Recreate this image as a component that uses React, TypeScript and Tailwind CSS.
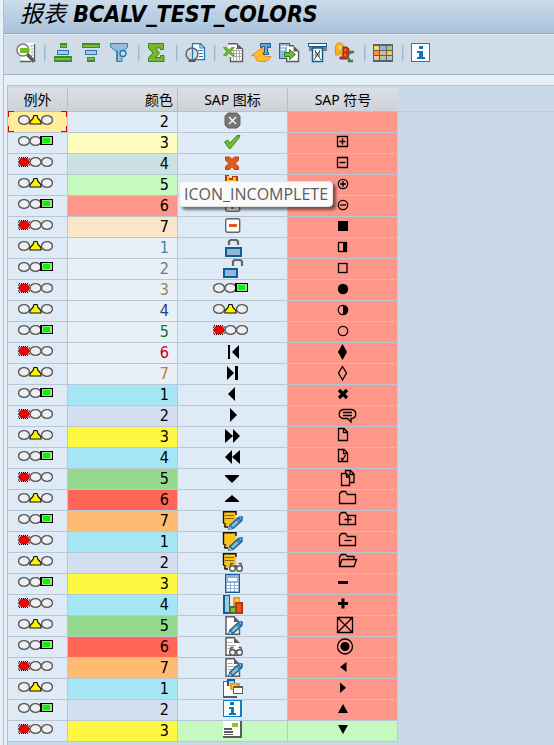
import type { ReactNode } from "react";

type Light = "red" | "yellow" | "green";

interface Row {
	light: Light;
	value: number;
	cell: string;
	icon: ReactNode;
	symbol: ReactNode;
}

function Lamp({ cx }: { cx: number }) {
	return <ellipse cx={cx} cy="6" rx="5.5" ry="4.4" fill="#efefef" stroke="#5a5a5a" strokeWidth="1.4" />;
}

function TrafficLight({ light }: { light: Light }) {
	return (
		<svg width="35" height="12" viewBox="0 0 35 12" className="block" role="img" aria-label={light}>
			{light === "red" ? (
				<g>
					<rect x="1" y="2" width="10" height="8" fill="#ff8a80" />
					<path d="M1 1.500h10M1 10.500h10" stroke="#000" strokeDasharray="1 1" />
					<path d="M.500 2.500v8M11.500 2.500v8" stroke="#000" strokeDasharray="1 2" />
					<ellipse cx="6" cy="6" rx="5" ry="4" fill="#fa0000" stroke="#5a0000" strokeWidth="0.6" />
				</g>
			) : (
				<Lamp cx={6} />
			)}
			{light !== "yellow" && <Lamp cx={17.5} />}
			{light === "green" ? (
				<g shapeRendering="crispEdges">
					<rect x="22" y="1" width="13" height="9" fill="#000" />
					<rect x="24" y="2" width="10" height="7" fill="#a4dd90" />
					<rect x="25" y="3" width="7" height="5" fill="#00f800" />
				</g>
			) : (
				<Lamp cx={29} />
			)}
			{light === "yellow" && (
				<path d="M16 1.500h3l1 3 1.500 1.500 1.500 2v2H12v-2l1.500-2 1.500-1.500z" fill="#fff200" stroke="#111" strokeWidth="1.200" />
			)}
		</svg>
	);
}

function Glyph({ children, crisp }: { children?: ReactNode; crisp?: boolean }) {
	return (
		<svg
			width="21"
			height="20"
			viewBox="0 0 21 20"
			className="block overflow-visible"
			shapeRendering={crisp ? "crispEdges" : undefined}
			aria-hidden="true"
		>
			{children}
		</svg>
	);
}

function Pencil() {
	return (
		<g>
			<path d="M6 19l1-5L16.500 5.500 20 5l1 1-.500 4L11.500 18z" fill="#1f6b9c" />
			<path d="M9 14.500l7-6.500 2 2-7 6.500z" fill="#8fb6d6" />
			<path d="M17 6.500l2.500-.500-.500 3z" fill="#7fb0d4" />
			<path d="M7 18.500l.800-3.200 2.200 2z" fill="#a8cbe2" />
			<path d="M14 8l3.500 3.500" stroke="#12557f" />
		</g>
	);
}

function Glasses() {
	return (
		<g fill="#f4f6f8" stroke="#5c5c5c" strokeWidth="1.4">
			<path d="M8 14.500l1-4h2.500M20 14.500l-1-4h-2.500M12 13.500h4" fill="none" />
			<circle cx="10.500" cy="15.500" r="2.800" />
			<circle cx="17.500" cy="15.500" r="2.800" />
		</g>
	);
}

function Note({ lines, children }: { lines?: boolean; children: ReactNode }) {
	return (
		<Glyph>
			<path d="M1.500 1h12.500v13.500H7L5.500 16H2v-1.500l1.500-1.500-2-2z" fill="#ffc41a" />
			<path d="M1.500 12V.700H14V4" fill="none" stroke="#111" strokeWidth="1.400" />
			<path d="M1 12l2.500 1-1 1.500.5 1.500H6M14 12v2.500H8" fill="none" stroke="#111" strokeWidth="1.300" />
			{lines && <path d="M3 4.500h9M3 7.500h9" stroke="#7d6320" />}
			{children}
		</Glyph>
	);
}

function Doc({ lines = true, children }: { lines?: boolean; children: ReactNode }) {
	return (
		<Glyph>
			<path d="M4 1h8l5 5v12.500H4z" fill="#fff" />
			<path d="M13 .700H4V18.300h13.500V13" fill="none" stroke="#5c5c5c" strokeWidth="1.500" />
			<path d="M12 0l6 6h-6z" fill="#5c5c5c" />
			{lines && <path d="M5.500 5.500h5M5.500 8.500h8M5.500 11.500h6" stroke="#a8a8a8" />}
			{children}
		</Glyph>
	);
}

function Tri({ points }: { points: string }) {
	return <polygon points={points} fill="#000" />;
}

const outline = { fill: "none", stroke: "#000", strokeWidth: 1.3 };
const folder = "M7.500 13.500v-9.500l2-2.500h4l2 3h8v9z";

const icons: ReactNode[] = [
	<Glyph>
		<path d="M6 1h9l3 3v9l-3 3H6l-3-3V4z" fill="#757575" stroke="#626262" />
		<path d="M7 5l7 7M14 5l-7 7" stroke="#fff" strokeWidth="1.300" />
	</Glyph>,
	<Glyph>
		<path d="M2.500 9l3-2 2.500 3 7-7.500h3L17 5 8.500 15.500H7z" fill="#76b82a" stroke="#3c8a35" />
	</Glyph>,
	<Glyph>
		<path d="M3.500 3h4L10 5.500 12.500 3h4v3l-3.500 3.500 3.500 3v3h-4L10 12.500 7.500 15.500h-4v-3L7 9.500 3.500 6z" fill="#e35a16" stroke="#b3411c" />
	</Glyph>,
	<Glyph crisp>
		<path d="M3 0h4v3h3V1h6v6H3z" fill="#b93418" />
		<path d="M5 1h2v4h4V2h3v5H5z" fill="#ffc519" />
	</Glyph>,
	<Glyph>
		<rect x="3.700" y="1.700" width="14" height="13.600" rx="2" fill="#fff" stroke="#666" strokeWidth="1.400" />
		<path d="M7 9.500h7M10.500 6v7" stroke="#56a62b" strokeWidth="2.500" />
	</Glyph>,
	<Glyph>
		<rect x="3.700" y="1.700" width="14" height="13.600" rx="2" fill="#fff" stroke="#666" strokeWidth="1.400" />
		<path d="M7 8.500h8" stroke="#e35a16" strokeWidth="3" />
	</Glyph>,
	<Glyph>
		<path d="M7 7V3.500L8.500 2h6L16 3.500V7" fill="none" stroke="#666" strokeWidth="2.200" />
		<rect x="4" y="10" width="15" height="8" fill="#95b6da" stroke="#0f5f94" strokeWidth="2" />
	</Glyph>,
	<Glyph>
		<path d="M11 7V2.500L12.500 1h6L20 2.500V7" fill="none" stroke="#666" strokeWidth="2.200" />
		<rect x="2" y="10" width="13" height="8" fill="#95b6da" stroke="#0f5f94" strokeWidth="2" />
	</Glyph>,
	<TrafficLight light="green" />,
	<TrafficLight light="yellow" />,
	<TrafficLight light="red" />,
	<Glyph>
		<rect x="6" y="2" width="2" height="14" />
		<Tri points="17,2 17,16 10,9" />
	</Glyph>,
	<Glyph>
		<Tri points="5,2 5,16 12,9" />
		<rect x="13" y="2" width="3" height="14" />
	</Glyph>,
	<Glyph>
		<Tri points="13,2 13,16 6,9" />
	</Glyph>,
	<Glyph>
		<Tri points="8,2 8,16 15,9" />
	</Glyph>,
	<Glyph>
		<Tri points="3,2 3,16 11,9" />
		<Tri points="11,2 11,16 18,9" />
	</Glyph>,
	<Glyph>
		<Tri points="10,2 10,16 3,9" />
		<Tri points="18,2 18,16 10,9" />
	</Glyph>,
	<Glyph>
		<Tri points="3,6 17,6 17,7 10,14 3,7" />
	</Glyph>,
	<Glyph>
		<Tri points="3,12 17,12 17,11 10,5 3,11" />
	</Glyph>,
	<Note lines>
		<Pencil />
	</Note>,
	<Note>
		<Pencil />
	</Note>,
	<Note lines>
		<Glasses />
	</Note>,
	<Glyph crisp>
		<rect x="3" y="0" width="15" height="19" fill="#0f5f94" />
		<rect x="4" y="1" width="13" height="17" fill="#8db3d6" />
		<rect x="6" y="4" width="9" height="3" fill="#fff" />
		<path d="M5 9h3v2H5zM9 9h3v2H9zM13 9h3v2h-3zM5 12h3v2H5zM9 12h3v2H9zM13 12h3v2h-3zM5 15h3v2H5zM9 15h3v2H9zM13 15h3v2h-3z" fill="#fff" />
	</Glyph>,
	<Glyph crisp>
		<rect x="1" y="0" width="7" height="19" fill="#0f5f94" />
		<rect x="3" y="1" width="4" height="16" fill="#a9c4de" />
		<rect x="11" y="2" width="7" height="13" fill="#f39a12" />
		<rect x="13" y="4" width="4" height="6" fill="#ffcc22" />
		<rect x="13" y="7" width="8" height="12" fill="#b93418" />
		<rect x="15" y="9" width="4" height="8" fill="#e35a16" />
		<rect x="7" y="11" width="7" height="8" fill="#2f7d33" />
		<rect x="9" y="13" width="4" height="4" fill="#86bd1f" />
	</Glyph>,
	<Doc lines={false}>
		<Pencil />
	</Doc>,
	<Doc>
		<Glasses />
	</Doc>,
	<Doc>
		<Pencil />
	</Doc>,
	<Glyph crisp>
		<path d="M1 2h4v15h10v2H1z" fill="#5c5c5c" />
		<path d="M2 3h11v14H2z" fill="#fff" />
		<rect x="5" y="0" width="8" height="7" fill="#0f5f94" />
		<rect x="7" y="2" width="5" height="5" fill="#b8d0e6" />
		<rect x="8" y="4" width="10" height="7" fill="#f39a12" />
		<rect x="10" y="6" width="5" height="4" fill="#ffd84a" />
		<rect x="11" y="7" width="10" height="8" fill="#5c5c5c" />
		<rect x="12" y="9" width="8" height="5" fill="#fff" />
	</Glyph>,
	<Glyph crisp>
		<rect x="1" y="0" width="19" height="17" fill="#0f7ec2" />
		<rect x="2" y="1" width="16" height="15" fill="#fff" />
		<path d="M8 2h4v3H8zM7 7h5v6h2v2H7v-2h2V9H7z" fill="#0a78bd" />
	</Glyph>,
	<Glyph crisp>
		<rect x="1" y="0" width="19" height="17" fill="#5c5c5c" />
		<rect x="1" y="0" width="17" height="15" fill="#fff" />
		<rect x="10" y="2" width="6" height="4" fill="#8fc32f" />
		<path d="M2 7h8v2H2zM2 10h9v2H2zM2 13h9v1H2z" fill="#5c5c5c" />
	</Glyph>,
];

const symbols: ReactNode[] = [
	null,
	<Glyph>
		<path d="M5.500 3.500h10v10h-10zM7.500 8.500h6M10.500 5.500v6" {...outline} />
	</Glyph>,
	<Glyph>
		<path d="M5.500 3.500h10v10h-10zM7.500 8.500h6" {...outline} />
	</Glyph>,
	<Glyph>
		<circle cx="11" cy="9" r="4.700" {...outline} />
		<path d="M8 9h6M11 6v6" {...outline} />
	</Glyph>,
	<Glyph>
		<circle cx="11" cy="9" r="4.700" {...outline} />
		<path d="M8 9h6" {...outline} />
	</Glyph>,
	<Glyph>
		<rect x="6" y="4" width="10" height="10" />
	</Glyph>,
	<Glyph>
		<rect x="6.500" y="4.500" width="8" height="9" {...outline} />
		<rect x="11" y="4" width="4" height="10" />
	</Glyph>,
	<Glyph>
		<rect x="6.500" y="4.500" width="8.500" height="9" {...outline} />
	</Glyph>,
	<Glyph>
		<circle cx="11" cy="9" r="5.200" />
	</Glyph>,
	<Glyph>
		<circle cx="11" cy="9" r="4.700" {...outline} />
		<path d="M11 4.500a4.500 4.500 0 0 1 0 9z" />
	</Glyph>,
	<Glyph>
		<circle cx="11" cy="9" r="4.700" {...outline} />
	</Glyph>,
	<Glyph>
		<Tri points="10.500,1 15,9 10.500,17 6,9" />
	</Glyph>,
	<Glyph>
		<path d="M10.500 2.500L14.500 9l-4 7-4-7z" {...outline} />
	</Glyph>,
	<Glyph>
		<path d="M7 5l8 8M15 5l-8 8" stroke="#000" strokeWidth="3.200" />
	</Glyph>,
	<Glyph>
		<path d="M11 3.500h9c5 1 5 8 0 9h-1v3.500l-3.500-3.500H11c-5-1-5-8 0-9zM11 6.500h9M11 9.500h9" {...outline} />
	</Glyph>,
	<Glyph>
		<path d="M6.500 1.500h5.500l3.500 3.500v8.500h-9zM11.500 1.500V5.500h4" {...outline} />
	</Glyph>,
	<Glyph>
		<path d="M6.500 1.500h5.500l3.500 3.500v8.500h-9zM11.500 1.500V5.500h4M9 10l1.500 2 3-5" {...outline} />
	</Glyph>,
	<Glyph>
		<path d="M9.500 4.500h5l3 3v9h-8zM14.500 4.500v3.500h3M13.500 4V1.500h5l3.500 3.500v8.500h-4.500M18 1.500V5.500h4" {...outline} />
	</Glyph>,
	<Glyph>
		<path d={folder} {...outline} />
	</Glyph>,
	<Glyph>
		<path d={folder} {...outline} />
		<path d="M12.500 8.500h7M16 5v7" {...outline} />
	</Glyph>,
	<Glyph>
		<path d={folder} {...outline} />
		<path d="M12.500 8.500h7" {...outline} />
	</Glyph>,
	<Glyph>
		<path d="M7.500 13.500v-9.500l2-2.500h4l2 2h6.500v3M7.500 13.500l2.500-7h14.500l-2.500 7z" {...outline} />
	</Glyph>,
	<Glyph>
		<rect x="6" y="7" width="10" height="3" />
	</Glyph>,
	<Glyph>
		<path d="M6 8.500h10M11 3.500v10" stroke="#000" strokeWidth="3" />
	</Glyph>,
	<Glyph>
		<path d="M5.500 1.500h15v15h-15zM6 2l14 14M20 2L6 16" {...outline} />
	</Glyph>,
	<Glyph>
		<circle cx="13" cy="9.500" r="7.500" {...outline} />
		<circle cx="13" cy="9.500" r="4.500" />
	</Glyph>,
	<Glyph>
		<Tri points="14.500,4 14.500,14 8,9" />
	</Glyph>,
	<Glyph>
		<Tri points="8,3.500 8,14 14,8.800" />
	</Glyph>,
	<Glyph>
		<Tri points="6,13 16,13 11,4" />
	</Glyph>,
	<Glyph>
		<Tri points="6,4 16,4 11,13" />
	</Glyph>,
];

const cells: [number, string][] = [
	[2, "bg-[#deeaf5]"],
	[3, "bg-[#fffdbd]"],
	[4, "bg-[#cae2e2]"],
	[5, "bg-[#c6f9c0]"],
	[6, "bg-[#ff968a]"],
	[7, "bg-[#fae5c8]"],
	[1, "bg-[#e9f0f6] text-[#418aa8]"],
	[2, "bg-[#e9f0f6] text-[#6b7885]"],
	[3, "bg-[#e9f0f6] text-[#8c8a58]"],
	[4, "bg-[#e9f0f6] text-[#264478]"],
	[5, "bg-[#e9f0f6] text-[#0a7434]"],
	[6, "bg-[#e9f0f6] text-[#c4001c]"],
	[7, "bg-[#e9f0f6] text-[#c08030]"],
	[1, "bg-[#a5e6f5]"],
	[2, "bg-[#d3dff0]"],
	[3, "bg-[#fff843]"],
	[4, "bg-[#a5e6f5]"],
	[5, "bg-[#95d98f]"],
	[6, "bg-[#ff6658]"],
	[7, "bg-[#ffbb71]"],
	[1, "bg-[#a5e6f5]"],
	[2, "bg-[#d3dff0]"],
	[3, "bg-[#fff843]"],
	[4, "bg-[#a5e6f5]"],
	[5, "bg-[#95d98f]"],
	[6, "bg-[#ff6658]"],
	[7, "bg-[#ffbb71]"],
	[1, "bg-[#a5e6f5]"],
	[2, "bg-[#d3dff0]"],
	[3, "bg-[#fff843]"],
];

const lights: Light[] = ["yellow", "green", "red"];

const rows: Row[] = cells.map(([value, cell], i) => ({
	light: lights[i % 3],
	value,
	cell,
	icon: icons[i],
	symbol: symbols[i],
}));

function ToolButton({ label, children }: { label: string; children: ReactNode }) {
	return (
		<button type="button" aria-label={label} className="size-5 shrink-0">
			<svg width="20" height="20" viewBox="0 0 20 20" className="block overflow-visible">
				{children}
			</svg>
		</button>
	);
}

function Separator() {
	return <span className="h-4 w-0.5 shrink-0 border-l border-[#9db8d3] bg-[#bccfe2]" />;
}

function Toolbar() {
	return (
		<div className="flex h-10 items-center gap-2 border-b border-[#a4b5c6] bg-[#d0dde8] pb-1 pl-3">
			<ToolButton label="Details">
				<path d="M4 0h15v19H5z" fill="#fff" />
				<path d="M18.500 1v18M4 18.500h11" stroke="#5c5c5c" strokeWidth="1.300" />
				<path d="M14 3h3M15 6h2M15 9h2M15 12h2" stroke="#8aa08a" />
				<circle cx="7" cy="7" r="6" fill="#fff" stroke="#777" strokeWidth="1.500" />
				<path d="M4 5h9v5H4z" fill="#76b82a" />
				<path d="M11.500 11.500L18 18.500" stroke="#5c5c5c" strokeWidth="3.500" />
			</ToolButton>
			<Separator />
			<ToolButton label="Sort ascending">
				<g shapeRendering="crispEdges">
					<path d="M6 0h7v5H6zM0 13h18v6H0z" fill="#3a8a3a" />
					<path d="M7 2h5v2H7zM1 15h16v2H1z" fill="#86bd1f" />
					<rect x="3.500" y="7.500" width="11" height="4" fill="#a9cbe8" stroke="#2478ac" />
				</g>
			</ToolButton>
			<ToolButton label="Sort descending">
				<g shapeRendering="crispEdges">
					<path d="M0 0h18v5H0zM5 14h8v5H5z" fill="#3a8a3a" />
					<path d="M1 2h16v2H1zM6 15h6v2H6z" fill="#86bd1f" />
					<rect x="3.500" y="7.500" width="11" height="4" fill="#a9cbe8" stroke="#2478ac" />
				</g>
			</ToolButton>
			<ToolButton label="Set filter">
				<path d="M.500 .500h17v4L12 9v9.500H7V9L.500 4z" fill="#94bcdc" stroke="#3a7fae" />
				<path d="M7 7v11.500" stroke="#22658f" />
				<circle cx="13" cy="10.500" r="3" fill="#c2daee" stroke="#2478ac" strokeWidth="1.300" />
			</ToolButton>
			<Separator />
			<ToolButton label="Total">
				<path d="M.500 .500h15v6h-3V5H7.500l4 5-4 4.500h5v-2h3.500V18.500H.500V14.500L5 10 .500 5z" fill="#76b82a" stroke="#37872f" />
			</ToolButton>
			<Separator />
			<ToolButton label="Print preview">
				<path d="M6.500.700h8l4 4v12h-12z" fill="#fff" stroke="#2478ac" strokeWidth="1.300" />
				<path d="M14 1v4h4M12 7.500h5M13 10.500h4M13 13.500h4" fill="none" stroke="#2478ac" strokeWidth="1.200" />
				<circle cx="6" cy="11" r="6" fill="#cfdde9" stroke="#626262" strokeWidth="1.400" />
				<path d="M6.500 6v10" stroke="#2478ac" strokeWidth="1.200" />
				<path d="M2.500 18h7" stroke="#5c5c5c" strokeWidth="2" />
			</ToolButton>
			<Separator />
			<ToolButton label="Spreadsheet">
				<path d="M4 1h9l5 5v12.500H6V14z" fill="#fff" />
				<path d="M4 .700h9M6.500 14v4.500h12V5.500" fill="none" stroke="#5c5c5c" strokeWidth="1.400" />
				<path d="M13 0l6 6h-6z" fill="#5c5c5c" />
				<path d="M8 7.500h9M8 10.500h9M8 13.500h9M9.500 7v10M12.500 5v12M15.500 7v10" stroke="#aaa" />
				<path d="M-.500 4.500h3l2.500 2.500 2.500-2.500h3L7 8.500l3.500 4h-3L5 10l-2.500 2.500h-3l3-4z" fill="#76b82a" stroke="#3f8f36" strokeWidth=".7" />
			</ToolButton>
			<ToolButton label="Word processing">
				<path d="M-.500 12.500L9 5.500h2v5l2 3h6l-3 3.500-3 1.500H8l-4-1.500v-4z" fill="#ffc02a" stroke="#f08a10" />
				<path d="M8.500.500h10v4h-2V3.500h-1v6h1v2h-5v-2h1v-6h-2v1h-2z" fill="#6ba2cc" stroke="#155f94" />
			</ToolButton>
			<ToolButton label="Local file">
				<rect x="-.500" y=".500" width="10" height="15" fill="#8fb5d8" stroke="#22658f" />
				<path d="M1 3.500h5M1 6.500h4" stroke="#fff" strokeWidth="1.500" />
				<path d="M7 3h7l5 5v10H7z" fill="#fff" />
				<path d="M9 2.700h5M6.700 15v3.500H18.500V8" fill="none" stroke="#5c5c5c" strokeWidth="1.400" />
				<path d="M13.500 2.500l6 6h-6z" fill="#5c5c5c" />
				<path d="M4.500 9.500h5V6.500L15.500 11.500l-6 5V13.500H4.500z" fill="#76b82a" stroke="#2f7d33" />
			</ToolButton>
			<ToolButton label="Mail recipient">
				<path d="M0 0h19v4H0z" fill="#0f5f94" />
				<path d="M1 1h17v2H1z" fill="#fff" />
				<path d="M1 4h18v4H1z" fill="#74818e" />
				<path d="M4.500 5h10v13.500h-10z" fill="#fff" stroke="#0f5f94" strokeWidth="1.500" />
				<path d="M7 7l1 3v4l-2 3M12 7l-1 3v4l2 3M8 9l3 5M11 9l-3 5" fill="none" stroke="#222" strokeWidth=".8" />
			</ToolButton>
			<ToolButton label="ABC analysis">
				<path d="M-.500 12V3l2-3h4l2 3v9H5V9H3v3z" fill="#ffb514" stroke="#ed8b10" />
				<path d="M3 3v3h2V3z" fill="#cfdde9" />
				<path d="M7 4h4l2 2v3l-1 2 1 2-2 3H4v-2h3z" fill="#c53b1c" stroke="#8d2412" />
				<path d="M8 6h2v2H8zM8 11h2v2H8z" fill="#f07030" />
				<path d="M18 9h-3l-2 2M13 15v3h4" fill="none" stroke="#3a7f45" strokeWidth="2.500" />
			</ToolButton>
			<Separator />
			<ToolButton label="Change layout">
				<g shapeRendering="crispEdges">
					<rect x="-1" y="1" width="20" height="18" fill="#5c6068" />
					<path d="M0 3h5v4H0z" fill="#ffd45e" />
					<path d="M6 3h6v4H6z" fill="#8fb5d8" />
					<path d="M13 3h5v4h-5z" fill="#a5c97a" />
					<path d="M0 8h5v4H0z" fill="#f39a12" />
					<path d="M6 8h6v4H6z" fill="#ddb0a0" />
					<path d="M13 8h5v4h-5z" fill="#ffc91e" />
					<path d="M0 13h5v4H0z" fill="#f4bcc4" />
					<path d="M6 13h6v4H6z" fill="#a8d08a" />
					<path d="M13 13h5v4h-5z" fill="#a9c4e4" />
				</g>
			</ToolButton>
			<Separator />
			<ToolButton label="Information">
				<g shapeRendering="crispEdges">
					<rect x="-1" y="0" width="19" height="19" fill="#0f7ec2" />
					<rect x="0" y="1" width="17" height="17" fill="#fff" />
					<path d="M7 3h4v3H7zM5 8h6v6h2v2H5v-2h2v-4H5z" fill="#0a78bd" />
				</g>
			</ToolButton>
		</div>
	);
}

function Corners() {
	return (
		<>
			<span className="absolute -top-px left-0 size-1.5 border-t border-l border-[#e0000f]" />
			<span className="absolute -top-px right-0 size-1.5 border-t border-r border-[#e0000f]" />
			<span className="absolute bottom-0 left-0 size-1.5 border-b border-l border-[#e0000f]" />
			<span className="absolute right-0 bottom-0 size-1.5 border-r border-b border-[#e0000f]" />
		</>
	);
}

const th =
	"h-6 border-r border-b border-[#b3bfcb] p-0 text-sm leading-5 font-normal text-black last:border-r-0";
const td = "h-[21px] border-r border-b border-[#b9c7d5] p-0";

function AlvGrid() {
	return (
		<div className="relative flex items-start">
			<table className="shrink-0 table-fixed border-separate border-spacing-0">
				<colgroup>
					<col className="w-[60px]" />
					<col className="w-[110px]" />
					<col className="w-[110px]" />
					<col className="w-[110px]" />
				</colgroup>
				<thead>
					<tr className="bg-linear-to-b from-[#dcdfe4] to-[#cdd2d8]">
						<th className={th}>例外</th>
						<th className={`${th} pr-1 text-right`}>颜色</th>
						<th className={th}>SAP 图标</th>
						<th className={th}>SAP 符号</th>
					</tr>
				</thead>
				<tbody>
					{rows.map((row, i) => (
						<tr key={i} className="bg-[#deeaf5]">
							<td className={`${td} relative align-top ${i === 0 ? "bg-[#ffed9c]" : ""}`}>
								<div className="pt-0.5 pl-2.5">
									<TrafficLight light={row.light} />
								</div>
								{i === 0 && <Corners />}
							</td>
							<td
								className={`${td} pr-2 text-right font-['DejaVu_Sans_Condensed','DejaVu_Sans',sans-serif] text-base leading-5 ${row.cell}`}
							>
								{row.value}
							</td>
							<td className={`${td} align-top ${i === 29 ? "bg-[#c6f9c0]" : ""}`}>
								<div className={`flex justify-center ${i > 7 && i < 11 ? "pt-0.5 pr-1" : ""}`}>
									{row.icon}
								</div>
							</td>
							<td className={`${td} align-top ${i === 29 ? "bg-[#c6f9c0]" : "bg-[#ff968a]"}`}>
								<div className="flex justify-center">{row.symbol}</div>
							</td>
						</tr>
					))}
				</tbody>
			</table>
			<div className="h-6 grow border-b border-[#b9c9d9]" />
			<div
				role="tooltip"
				className="absolute top-[93px] left-[171px] rounded-sm border border-[#e4e4e4] bg-[#fafafa] px-1 font-['Open_Sans',sans-serif] text-base leading-6 text-[#5c5c5c] shadow-[3px_3px_3px_rgba(0,0,0,0.5)]"
			>
				ICON_INCOMPLETE
			</div>
		</div>
	);
}

function App() {
	return (
		<div className="min-h-screen bg-[#e8f0f7] pl-[3px] font-['Noto_Sans','Noto_Sans_CJK_SC',sans-serif] text-black">
			<div className="flex min-h-screen flex-col border-l border-[#b2c1d1]">
				<header className="flex h-[34px] items-start border-b border-[#98abc0] bg-linear-to-b from-[#cbdcea] to-[#a9c1da] pl-4">
					<h1 className="font-['DejaVu_Sans_Condensed','DejaVu_Sans','Noto_Sans_CJK_SC',sans-serif] text-[23px] leading-7 font-bold whitespace-nowrap italic">
						<span className="font-normal">报表</span> BCALV_TEST_COLORS
					</h1>
				</header>
				<div className="border-t border-[#e4edf5]">
					<Toolbar />
				</div>
				<main className="mt-2.5 ml-[3px] grow border-t border-l border-[#b2c4d6] bg-[#cad9e8] pt-0.5">
					<AlvGrid />
				</main>
			</div>
		</div>
	);
}

export default App;
